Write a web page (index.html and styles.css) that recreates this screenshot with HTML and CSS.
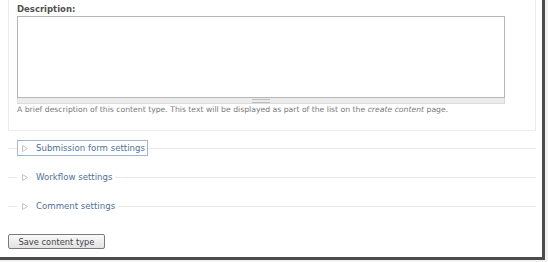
FILE: index.html
```html
<!DOCTYPE html>
<html lang="en">
<head>
  <meta charset="UTF-8" />
  <title>Content type</title>
  <link rel="stylesheet" href="styles.css">
</head>
<body>
  <div class="shot">
    <form class="page">
      <fieldset class="fs-main">
        <label class="field-label" for="desc">Description:</label>
        <textarea id="desc" class="desc"></textarea>
        <div class="grippie"><span class="grip"></span></div>
        <div class="help">A brief description of this content type. This text will be displayed as part of the list on the <em>create content</em> page.</div>
      </fieldset>

      <fieldset class="collapsible">
        <legend><a href="#" class="toggle focused"><svg class="arrow" width="6" height="7" viewBox="0 0 6 7"><path d="M0.5 0.5 L5.5 3.5 L0.5 6.5 Z" fill="none" stroke="#c4c4c4" stroke-width="1"/></svg>Submission form settings</a></legend>
      </fieldset>
      <fieldset class="collapsible">
        <legend><a href="#" class="toggle"><svg class="arrow" width="6" height="7" viewBox="0 0 6 7"><path d="M0.5 0.5 L5.5 3.5 L0.5 6.5 Z" fill="none" stroke="#c4c4c4" stroke-width="1"/></svg>Workflow settings</a></legend>
      </fieldset>
      <fieldset class="collapsible">
        <legend><a href="#" class="toggle"><svg class="arrow" width="6" height="7" viewBox="0 0 6 7"><path d="M0.5 0.5 L5.5 3.5 L0.5 6.5 Z" fill="none" stroke="#c4c4c4" stroke-width="1"/></svg>Comment settings</a></legend>
      </fieldset>

      <button type="button" class="save">Save content type</button>
    </form>
  </div>
</body>
</html>
```

FILE: styles.css
```css
body {
  margin: 0;
  background: #f2f2f2;
  font-family: 'DejaVu Sans', Verdana, sans-serif;
}
.shot {
  width: 542px;
  height: 257px;
  background: #fff;
  border-right: 3px solid #4c4c4c;
  border-bottom: 3px solid #4c4c4c;
  overflow: hidden;
}
.page {
  width: 528px;
  padding-left: 8px;
}
.fs-main {
  margin: -10px 0 0;
  padding: 12px 8px 15px;
  border: 1px solid #ececec;
}
.field-label {
  display: block;
  font-size: 8.5px;
  font-weight: bold;
  line-height: 12px;
  color: #505050;
  margin-bottom: 1px;
}
.desc {
  display: block;
  box-sizing: border-box;
  width: 488px;
  height: 82px;
  margin: 0;
  border: 1px solid #b5b5b5;
  resize: none;
  background: #fff;
}
.grippie {
  box-sizing: border-box;
  width: 488px;
  height: 6px;
  background: #ececec;
  border: 1px solid #dcdcdc;
  border-top: none;
  display: flex;
  justify-content: center;
  align-items: center;
}
.grip {
  width: 18px;
  height: 2px;
  border-top: 1px solid #bdbdbd;
  border-bottom: 1px solid #bdbdbd;
}
.help {
  margin-top: 1px;
  font-size: 7.7px;
  line-height: 10px;
  color: #7a7a7a;
  white-space: nowrap;
}
.collapsible {
  margin: 13px 0 0;
  padding: 0 0 0 9px;
  border: none;
  border-top: 1px solid #e8e8e8;
  height: 8px;
}
.fs-main + .collapsible {
  margin-top: 9px;
}
.collapsible legend {
  padding: 0;
}
.toggle {
  display: flex;
  align-items: center;
  height: 14px;
  padding: 0 2px 0 4px;
  border: 1px solid transparent;
  font-size: 8.6px;
  color: #4f6f9c;
  text-decoration: none;
}
.toggle.focused {
  border-color: #9fb8cf;
}
.arrow {
  margin-right: 8px;
}
.save {
  display: block;
  margin-top: 20px;
  width: 97px;
  height: 15px;
  padding: 0;
  font-family: 'DejaVu Sans', Verdana, sans-serif;
  font-size: 8.3px;
  color: #444;
  background: linear-gradient(#fafafa, #e2e2e2);
  border: 1px solid #7a7a7a;
  border-radius: 2px;
}
```
